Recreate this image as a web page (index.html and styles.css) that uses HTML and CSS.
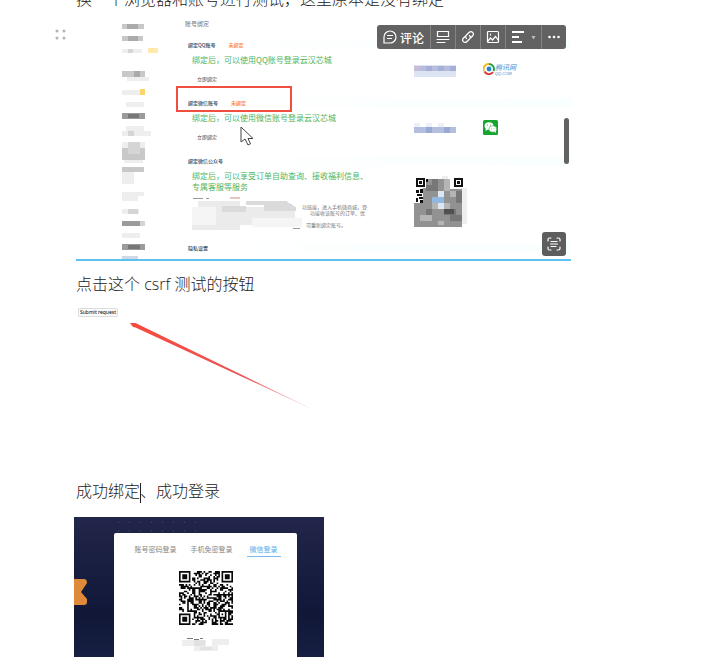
FILE: index.html
```html
<!DOCTYPE html>
<html lang="zh-CN">
<head>
<meta charset="utf-8">
<title>绑定测试</title>
<link rel="stylesheet" href="styles.css">
</head>
<body>
<main class="doc">
  <p class="line line-first">换一个浏览器和账号进行测试，这里原本是没有绑定</p>

  <figure class="shot">
    <svg class="handle" viewBox="0 0 12 12" aria-hidden="true"><g fill="#b3b3b3"><circle cx="2" cy="2" r="1.5"/><circle cx="9" cy="2" r="1.5"/><circle cx="2" cy="9" r="1.5"/><circle cx="9" cy="9" r="1.5"/></g></svg>

    <svg class="side" viewBox="0 0 40 239" shape-rendering="crispEdges" aria-hidden="true">
      <path fill="#c8c8c8" d="M0 4h22v5H0zM0 16h21v5H0zM0 51h23v6H0zM0 128h23v12H0zM0 147h22v5H0z"/>
      <path fill="#aaa" d="M5 4h11v5H5zM6 16h10v5H6zM12 51h6v6h-6z"/>
      <path fill="#eee" d="M0 29h20v4H0zM0 70h18v5H0zM5 57h22v4H5zM4 82h18v5H4zM4 106h18v5H4zM0 111h29v5H0zM0 122h23v6H0zM2 140h19v3H2zM0 152h12v12H0zM0 172h22v4H0zM0 176h16v5H0zM0 189h17v5H0zM0 213h18v5H0z"/>
      <path fill="#d5d5d5" d="M6 29h5v4H6zM6 122h12v12H6zM6 189h10v5H6zM6 111h6v5H6z"/>
      <path fill="#ffe9ab" d="M26 28h10v5H26z"/><path fill="#fbd56d" d="M18 69h5v6h-5z"/>
      <path fill="#9b9b9b" d="M0 93h23v6H0zM0 201h18v5H0zM0 224h23v6H0z"/>
      <path fill="#777" d="M6 94h11v4H6zM6 225h12v4H6z"/><path fill="#d4d4d4" d="M18 201h5v5h-5z"/>
      <path fill="#cfd8e8" d="M0 236h16v3H0z"/>
    </svg>

    <div class="account">
      <h2 class="page-title">账号绑定</h2>
      <section class="bind">
        <h3 class="head">绑定QQ账号 <span class="unbound">未绑定</span></h3>
        <div class="row">
          <div class="info"><p class="tip">绑定后，可以使用QQ账号登录云汉芯城</p><button class="bind-btn" type="button">立即绑定</button></div>
          <svg class="mask" viewBox="0 0 42 12" shape-rendering="crispEdges" aria-hidden="true"><path fill="#dce3f2" d="M0 0h42v12H0z"/><path fill="#b9bddd" d="M0 1h42v5H0z"/><path fill="#a6afd8" d="M12 1h6v5h-6zM24 1h6v5h-6zM36 1h6v5h-6z"/><path fill="#c8bdd5" d="M0 1h6v5H0z"/></svg>
          <span class="qq"><svg viewBox="0 0 12 12" aria-hidden="true"><path d="M6 1A5 5 0 0 0 1 8" fill="none" stroke="#f4bd1c" stroke-width="2"/><path d="M1.5 8.5A5 5 0 0 0 10 9" fill="none" stroke="#dd3b36" stroke-width="2"/><path d="M6 1a5 5 0 0 1 4.5 7" fill="none" stroke="#22a14b" stroke-width="2"/><circle cx="6" cy="6" r="2.4" fill="#2382d0"/></svg><span class="qq-text"><span>腾讯网</span><small>QQ.COM</small></span></span>
        </div>
      </section>
      <section class="bind">
        <h3 class="head">绑定微信账号 <span class="unbound">未绑定</span></h3>
        <div class="row">
          <div class="info"><p class="tip">绑定后，可以使用微信账号登录云汉芯城</p><button class="bind-btn" type="button">立即绑定</button></div>
          <svg class="mask" viewBox="0 0 42 12" shape-rendering="crispEdges" aria-hidden="true"><path fill="#edf0f8" d="M0 0h6v4H0zM12 0h6v4h-6zM24 0h6v4h-6z"/><path fill="#b4bfdf" d="M0 4h42v6H0z"/><path fill="#98a9d3" d="M12 4h6v6h-6zM30 4h6v6h-6z"/></svg>
          <svg class="wechat" viewBox="0 0 15 15" aria-hidden="true"><rect width="15" height="15" rx="1.5" fill="#16a52f"/><ellipse cx="6" cy="6" rx="4.5" ry="3.7" fill="#fff"/><path d="M3 8l-.5 3L5 9.500z" fill="#fff"/><ellipse cx="9.800" cy="9" rx="3.900" ry="3.200" fill="#fff" stroke="#16a52f" stroke-width=".5"/><path d="M11 11.500l2 1.500-.4-2.500z" fill="#fff"/><g fill="#16a52f"><circle cx="4.500" cy="5" r=".5"/><circle cx="7.500" cy="5" r=".5"/><circle cx="8.500" cy="8.300" r=".4"/><circle cx="11" cy="8.300" r=".4"/></g></svg>
        </div>
      </section>
      <section class="bind">
        <h3 class="head">绑定微信公众号</h3>
        <div class="row row-tall">
          <div class="info">
            <p class="tip">绑定后，可以享受订单自助查询、接收福利信息、<br>专属客服等服务</p>
            <div class="detail">
              <svg class="smudge" viewBox="0 0 110 36" shape-rendering="crispEdges" aria-hidden="true"><path fill="#ebebeb" d="M6 5h42v6h47l8 4v8H84v6H48v5H0V11h6z"/><path fill="#f5f5f5" d="M0 11h24v18H0zM60 22h50v9H60z"/><path fill="#dadada" d="M54 5h40l10 6v4H72V9H54zM30 10h24v6H30z"/><path fill="#999" d="M1 2h10v1H1zM14 2h3v1h-3zM101 32h7v1h-7z"/><path fill="#e7c5c1" d="M38 1h10v2H38z"/></svg>
              <p class="fine">功链接，进入手机微商城，登<br><span class="fine-in">功接收该账号的订单、优</span><br><span class="fine-last">可重新绑定账号。</span></p>
            </div>
          </div>
          <svg class="code" viewBox="0 0 53 52" shape-rendering="crispEdges" aria-hidden="true">
            <path fill="#eee" d="M28 0h6v4h-6zM47 12h6v36h-6z"/><path fill="#929292" d="M12 3h24v10h12v38H0V27h9V12h3z"/>
            <path fill="#777" d="M18 3h6v6h-6zM12 9h12v6H12zM24 15h6v6h-6zM30 33h12v6H30zM36 39h12v6H36zM12 33h6v6h-6zM42 15h6v12h-6z"/>
            <path fill="#b5b5b5" d="M30 3h6v12h-6zM36 15h6v6h-6zM6 39h12v6H6zM18 21h6v12h-6zM30 27h6v6h-6zM24 45h6v4h-6z"/><path fill="#505050" d="M30 33h10v5H30z"/>
            <path fill="#91b8de" d="M18 21h12v6H18z"/><path fill="#dce7f4" d="M24 15h6v6h-6zM24 27h6v6h-6z"/>
            <path fill="#fff" d="M39 2h10v10H39z"/><path fill="#111" fill-rule="evenodd" d="M2 2h9v9H2zM4 4v5h5V4zM40 2h9v9h-9zM42 4v5h5V4zM5 5h3v3H5zM43 5h3v3h-3zM12 3h2v3h-2zM2 14h3v3H2zM6 13h3v4H6zM3 18h5v2H3zM2 22h2v4H2zM5 21h4v2H5zM6 24h3v3H6z"/>
          </svg>
        </div>
      </section>
      <h3 class="head">隐私设置</h3>
    </div>

    <div class="mark" aria-hidden="true"></div>
    <svg class="cursor" viewBox="0 0 14 20" aria-hidden="true"><path d="M1 1v15l4-3 3 6 2.500-1.200L8 12.500h5z" fill="#fff" stroke="#444" stroke-width="1"/></svg>
    <div class="thumb" aria-hidden="true"></div>

    <div class="toolbar" role="toolbar">
      <button type="button" class="tool tool-comment"><svg viewBox="0 0 14 14" aria-hidden="true"><path d="M1 13V7a6 6 0 1 1 6 6zM4.500 5.500h5M4.500 8.500h4"/></svg>评论</button>
      <button type="button" class="tool" aria-label="布局"><svg viewBox="0 0 14 14" aria-hidden="true"><path d="M1.500 1.500h11v5h-11zM1 9.500h12M1 12.500h8"/></svg></button>
      <button type="button" class="tool" aria-label="链接"><svg viewBox="0 0 14 14" aria-hidden="true"><path d="M5.500 8.500c-1.500-1.500-1-2.500 0-3.500l2.500-2.500c2.500-2.500 6 1 3.500 3.500L10 7.500M8.500 5.500c1.500 1.500 1 2.500 0 3.500L6 11.500c-2.500 2.500-6-1-3.500-3.500L4 6.500"/></svg></button>
      <button type="button" class="tool" aria-label="图片"><svg viewBox="0 0 14 14" aria-hidden="true"><rect x="1.500" y="1.500" width="11" height="11" rx="1"/><path d="M2 11l2.500-3 2 2L9.500 6.500l3 4M4.500 4v1"/></svg></button>
      <button type="button" class="tool tool-align" aria-label="对齐"><svg class="bars" viewBox="0 0 14 14" aria-hidden="true"><path d="M1 2h12M1 7h7M1 12h10"/></svg><svg class="caret-down" viewBox="0 0 5 5" aria-hidden="true"><path d="M.5 1h4L2.500 4.500z"/></svg></button>
      <button type="button" class="tool" aria-label="更多"><svg class="dots" viewBox="0 0 14 14" aria-hidden="true"><circle cx="2.500" cy="7" r="1.300"/><circle cx="7" cy="7" r="1.300"/><circle cx="11.500" cy="7" r="1.300"/></svg></button>
    </div>
    <button type="button" class="scan" aria-label="识别文字"><svg viewBox="0 0 14 14" aria-hidden="true"><path d="M1 4V2.500Q1 1 2.500 1H4M10 1h1.500Q13 1 13 2.500V4M13 10v1.500q0 1.500-1.500 1.500H10M4 13H2.500Q1 13 1 11.500V10M4 4.500h6M3.500 7h7M4 9.500h5"/></svg></button>
  </figure>

  <p class="line line-click">点击这个 csrf 测试的按钮</p>
  <button class="submit" type="button">Submit request</button>
  <svg class="arrow" viewBox="0 0 186 90" aria-hidden="true"><defs><linearGradient id="fade"><stop offset="0" stop-color="#f84a3c"/><stop offset=".6" stop-color="#ea5355"/><stop offset="1" stop-color="#e8a0ac" stop-opacity=".5"/></linearGradient></defs><path fill="url(#fade)" d="M0 0l5-.200 2 1L186 88 5.500 4.500 3 4z"/></svg>
  <p class="line line-done">成功绑定<span class="text-caret"></span>、成功登录</p>

  <section class="login">
    <svg class="deco" viewBox="0 0 14 28" aria-hidden="true"><path fill="#df8a3b" d="M0 1h10q3 0 3 4L7 14l6 7v3q0 3-3 3H0z"/></svg>
    <svg class="stars" viewBox="0 0 80 14" aria-hidden="true"><path d="M1 2h80M1 11h80" stroke="#464f7a" stroke-width="1" stroke-dasharray="1 10"/></svg>
    <div class="card">
      <nav class="tabs"><a href="#password">账号密码登录</a><a href="#phone">手机免密登录</a><a href="#wechat" class="active">微信登录</a></nav>
      <svg class="qr" viewBox="0 0 33 33" role="img" aria-label="二维码"><path id="modules" fill="#080808"/></svg>
      <svg class="blur" viewBox="0 0 47 16" shape-rendering="crispEdges" aria-hidden="true"><path fill="#eee" d="M0 3h24v6H0zM30 2h17v6H36v6H12V9h18z"/><path fill="#e2e2e2" d="M12 3h11v6H12zM18 10h12v3H18z"/><path fill="#777" d="M5 1h6v1H5zM12 2h5v1h-5zM18 1h3v1h-3z"/></svg>
    </div>
  </section>
</main>
<script src="qr.js"></script>
</body>
</html>
```
FILE: qr.js
```js
// Builds the module path of the login code on a 33 x 33 grid.
(function () {
  var size = 33, seed = 20117, d = '';
  function finder(x, y) {
    var r = Math.max(Math.abs(x - 3), Math.abs(y - 3));
    return r === 4 || r === 2 ? 0 : r < 4 ? 1 : -1;
  }
  for (var y = 0; y < size; y++) {
    for (var x = 0; x < size; x++) {
      seed = (seed * 1103515 + 12345) % 2147483648;
      var on = (seed >> 12) % 100 < 53 ? 1 : 0;
      var corners = [finder(x, y), finder(size - 1 - x, y), finder(x, size - 1 - y)];
      corners.forEach(function (c) { if (c >= 0) on = c; });
      var a = Math.max(Math.abs(x - 26), Math.abs(y - 26));
      if (a < 3) on = a === 1 ? 0 : 1;
      if (on) d += 'M' + x + ' ' + y + 'h1v1h-1z';
    }
  }
  document.getElementById('modules').setAttribute('d', d);
})();
```
FILE: styles.css
```css
* { box-sizing: border-box; }
body {
  margin: 0;
  background: #fff;
  color: #222;
  font-family: "Noto Sans", "Noto Sans CJK SC", sans-serif;
}
h2, h3, p, figure { margin: 0; font-weight: 400; }
button { margin: 0; padding: 0; border: 0; font-family: inherit; color: inherit; }
svg { display: block; flex: none; }

.doc {
  display: flex;
  flex-direction: column;
  align-items: flex-start;
  height: 100vh;
  padding-left: 76px;
  overflow: hidden;
}
.line {
  flex: none;
  font-size: 16px;
  line-height: 24px;
  font-weight: 300;
  font-family: "Open Sans", "Noto Sans CJK SC", sans-serif;
}
.line-first { margin-top: -13px; }
.line-click { margin-top: 11px; }
.line-done { margin-top: 66px; }

.shot {
  position: relative;
  display: flex;
  flex: none;
  width: 100%;
  max-width: 495px;
  margin-top: 9px;
  border-bottom: 2px solid #5dc3ee;
  font-family: "Noto Sans CJK SC", sans-serif;
}
.handle { position: absolute; left: -21px; top: 9px; width: 12px; height: 12px; }
.side { width: 40px; height: 239px; margin-left: 46px; margin-right: 22px; }
.account { flex: 1; min-width: 0; }
.page-title { font-size: 6px; line-height: 8px; color: #777; padding-left: 1px; }
.account > .page-title + .bind { margin-top: 12px; }
.head {
  display: flex;
  gap: 13px;
  height: 10px;
  padding-left: 4px;
  font-size: 5px;
  line-height: 10px;
  font-weight: 500;
  color: #2f465c;
  background: linear-gradient(90deg, #fff, #f9feff);
}
.unbound { color: #ff7b42; }
.row { display: flex; height: 48px; padding: 4px 52px 0 8px; }
.row-tall { height: 77px; }
.info { flex: 1; min-width: 0; }
.tip { font-size: 8px; line-height: 11px; color: #4fb560; white-space: nowrap; }
.bind-btn {
  display: block;
  margin: 10px 0 0 5px;
  background: none;
  font-size: 5px;
  line-height: 8px;
  color: #444;
}
.mask { width: 42px; height: 12px; margin: 11px 27px 0 0; }
.qq { display: flex; width: 36px; margin-top: 9px; }
.qq svg { width: 12px; height: 12px; }
.qq-text { display: flex; flex-direction: column; font-size: 7px; line-height: 9px; font-style: italic; color: #438bd0; white-space: nowrap; }
.qq-text small { font: italic 4px/4px "Liberation Sans", sans-serif; }
.wechat { width: 15px; height: 15px; margin: 8px 21px 0 0; }
.detail { display: flex; margin-top: 4px; }
.smudge { width: 110px; height: 36px; }
.fine { padding-top: 8px; font-size: 5px; line-height: 6px; color: #777; white-space: nowrap; }
.fine-in { padding-left: 8px; }
.fine-last { display: block; padding: 6px 0 0 4px; }
.code { width: 53px; height: 52px; margin: 6px 52px 0 0; }

.mark { position: absolute; left: 100px; top: 66px; width: 116px; height: 26px; border: 2px solid #f04f40; }
.cursor { position: absolute; left: 164px; top: 106px; width: 14px; height: 20px; }
.thumb { position: absolute; right: 2px; top: 98px; width: 5px; height: 46px; border-radius: 3px; background: #626262; }
.toolbar {
  position: absolute;
  right: 5px;
  top: 5px;
  display: flex;
  height: 24px;
  border-radius: 3px;
  overflow: hidden;
  background: #626262;
  color: #fff;
}
.tool { display: flex; align-items: center; justify-content: center; gap: 3px; width: 25px; background: none; }
.tool + .tool { border-left: 1px solid #858585; }
.tool-comment { width: 53px; font-size: 12px; font-weight: 500; }
.tool-align { width: 36px; gap: 6px; }
.tool svg, .scan svg { width: 14px; height: 14px; fill: none; stroke: #fff; stroke-width: 1.2; stroke-linecap: round; }
.tool .bars { stroke-width: 2; stroke-linecap: butt; }
.tool .caret-down { width: 5px; height: 5px; fill: #bbb; stroke: none; }
.tool .dots { fill: #fff; stroke: none; }
.scan {
  position: absolute;
  right: 5px;
  bottom: 3px;
  display: flex;
  align-items: center;
  justify-content: center;
  width: 24px;
  height: 24px;
  border-radius: 3px;
  background: #5d5d5d;
}

.submit {
  flex: none;
  margin: 12px 0 0 2px;
  width: 40px;
  height: 9px;
  border: 1px solid #ddd;
  border-radius: 1px;
  background: #fafafa;
  color: #000;
  font: 5px/7px "Noto Sans", sans-serif;
  white-space: nowrap;
}
.arrow { width: 186px; height: 90px; margin: 6px 0 0 54px; }
.text-caret { display: inline-block; width: 1px; height: 20px; margin-right: -1px; background: #222; vertical-align: middle; }

.login {
  position: relative;
  flex: 1;
  width: 250px;
  margin: 14px 0 0 -2px;
  padding: 16px 27px 0 40px;
  background: linear-gradient(#22264a, #101737 70%, #171f42);
  overflow: hidden;
}
.deco { position: absolute; left: 0; top: 61px; width: 14px; height: 28px; }
.stars { position: absolute; left: 43px; top: 3px; width: 80px; height: 14px; }
.card {
  position: relative;
  display: flex;
  flex-direction: column;
  align-items: center;
  height: 100%;
  border-radius: 2px 2px 0 0;
  background: #fff;
}
.tabs { display: flex; gap: 14px; margin: 9px 0 0 4px; font: 7px/14px "Noto Sans CJK SC", sans-serif; white-space: nowrap; }
.tabs a { color: #858585; text-decoration: none; }
.tabs .active { padding: 0 3px; color: #5aa9e8; border-bottom: 1px solid #78b8ec; }
.qr { width: 54px; height: 54px; margin-top: 14px; }
.blur { width: 47px; height: 16px; margin-top: 12px; }
```
